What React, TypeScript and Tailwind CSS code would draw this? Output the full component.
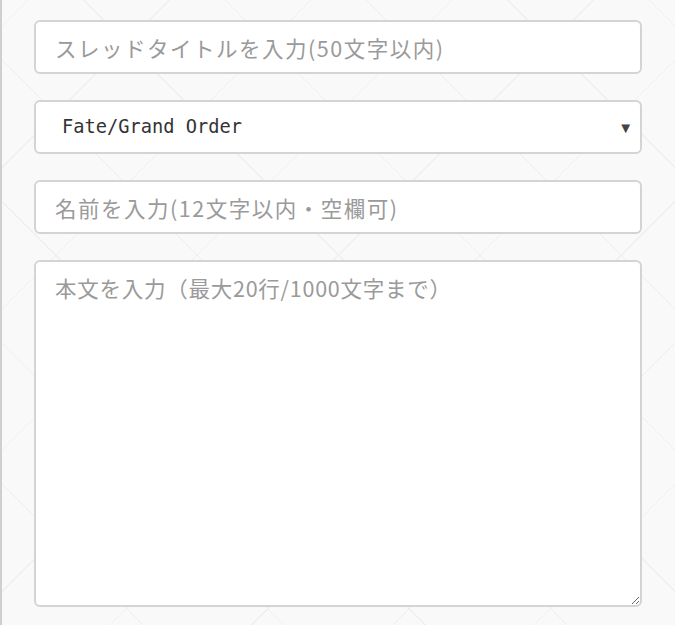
import React, { useState } from 'react'

const jp = '[font-family:"Noto_Sans_CJK_JP","Noto_Sans",sans-serif]'

const fieldBase =
  'w-full bg-white border-2 border-[#d4d4d4] rounded-[6px] text-[#333] placeholder:text-[#9a9a9a] outline-none'

const App = () => {
  const [title, setTitle] = useState('')
  const [board, setBoard] = useState('fgo')
  const [name, setName] = useState('')
  const [body, setBody] = useState('')

  return (
    <div className="w-full h-[625px] overflow-hidden border-l-2 border-[#cfcfcf] bg-[#f9f9f9] bg-[repeating-linear-gradient(45deg,transparent_0,transparent_99px,#efefef_99px,#efefef_100px),repeating-linear-gradient(-45deg,transparent_0,transparent_99px,#efefef_99px,#efefef_100px)]">
      <div className="flex flex-col gap-[26px] pl-[32px] pr-[33px] pt-[20px]">
        <input
          value={title}
          onChange={(e) => setTitle(e.target.value)}
          placeholder="スレッドタイトルを入力(50文字以内)"
          className={`${fieldBase} ${jp} h-[54px] px-[19px] text-[21.5px] tracking-[1.5px]`}
        />

        <div className="relative">
          <select
            value={board}
            onChange={(e) => setBoard(e.target.value)}
            className={`${fieldBase} h-[54px] pl-[26px] pr-10 appearance-none [font-family:"DejaVu_Sans_Mono",monospace] text-[18.7px] text-[#333]`}
          >
            <option value="fgo">Fate/Grand Order</option>
            <option value="gbf">Granblue Fantasy</option>
          </select>
          <span className="pointer-events-none absolute right-[9px] top-1/2 -translate-y-1/2 text-[15px] leading-none text-[#444]">
            ▼
          </span>
        </div>

        <input
          value={name}
          onChange={(e) => setName(e.target.value)}
          placeholder="名前を入力(12文字以内・空欄可)"
          className={`${fieldBase} ${jp} h-[54px] px-[19px] text-[21.5px] tracking-[1.5px]`}
        />

        <textarea
          value={body}
          onChange={(e) => setBody(e.target.value)}
          placeholder="本文を入力（最大20行/1000文字まで）"
          className={`${fieldBase} ${jp} h-[347px] px-[19px] pt-[10px] text-[21.5px] tracking-[0.75px] resize-y`}
        />
      </div>
    </div>
  )
}

export default App
